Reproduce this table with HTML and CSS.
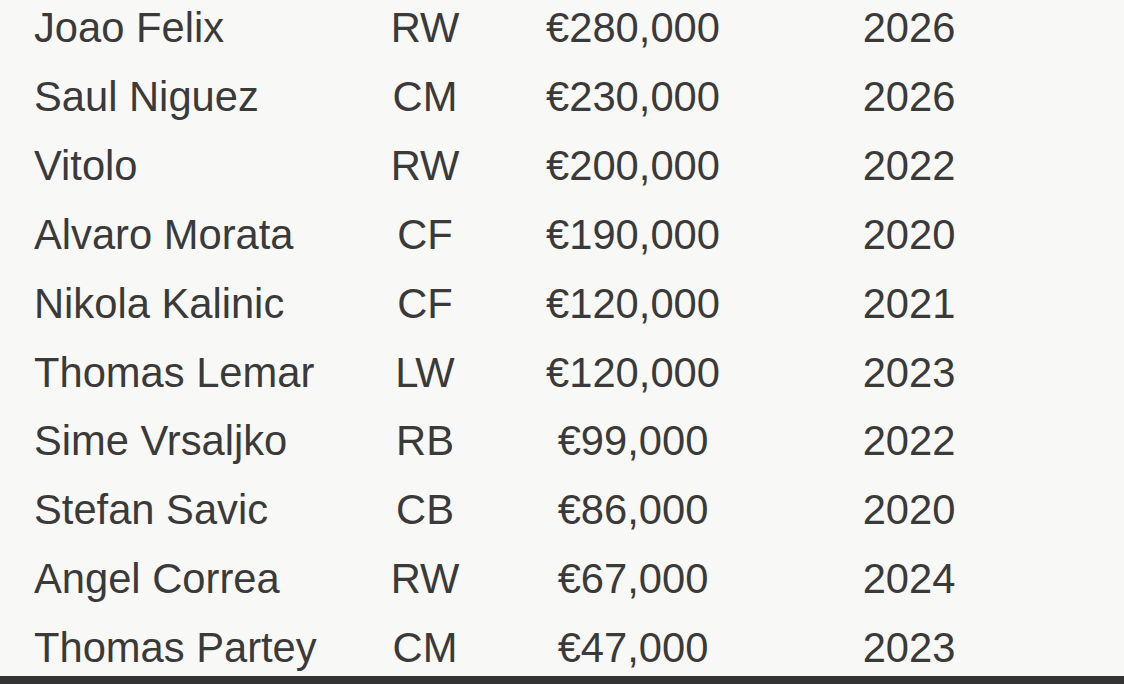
FILE: index.html
```html
<!DOCTYPE html>
<html>
<head>
<meta charset="utf-8">
<link rel="stylesheet" href="styles.css">
</head>
<body>
<div class="page">
  <div class="table-wrap">
    <div class="table">
      <div class="row"><span class="name">Joao Felix</span><span class="pos">RW</span><span class="wage">€280,000</span><span class="year">2026</span></div>
      <div class="row"><span class="name">Saul Niguez</span><span class="pos">CM</span><span class="wage">€230,000</span><span class="year">2026</span></div>
      <div class="row"><span class="name">Vitolo</span><span class="pos">RW</span><span class="wage">€200,000</span><span class="year">2022</span></div>
      <div class="row"><span class="name">Alvaro Morata</span><span class="pos">CF</span><span class="wage">€190,000</span><span class="year">2020</span></div>
      <div class="row"><span class="name">Nikola Kalinic</span><span class="pos">CF</span><span class="wage">€120,000</span><span class="year">2021</span></div>
      <div class="row"><span class="name">Thomas Lemar</span><span class="pos">LW</span><span class="wage">€120,000</span><span class="year">2023</span></div>
      <div class="row"><span class="name">Sime Vrsaljko</span><span class="pos">RB</span><span class="wage">€99,000</span><span class="year">2022</span></div>
      <div class="row"><span class="name">Stefan Savic</span><span class="pos">CB</span><span class="wage">€86,000</span><span class="year">2020</span></div>
      <div class="row"><span class="name">Angel Correa</span><span class="pos">RW</span><span class="wage">€67,000</span><span class="year">2024</span></div>
      <div class="row"><span class="name">Thomas Partey</span><span class="pos">CM</span><span class="wage">€47,000</span><span class="year">2023</span></div>
    </div>
  </div>
  <div class="bar"></div>
</div>
</body>
</html>
```

FILE: styles.css
```css
html, body {
  margin: 0;
  padding: 0;
  background: #f8f8f6;
}
.page {
  width: 1124px;
  height: 684px;
  display: flex;
  flex-direction: column;
  overflow: hidden;
}
.table-wrap {
  flex: 1;
  overflow: hidden;
}
.table {
  margin-top: -6px;
  padding-left: 34px;
  font-family: "Liberation Sans", Arial, sans-serif;
  font-size: 41.7px;
  line-height: 68.9px;
  color: #3a3a3a;
}
.row {
  display: grid;
  grid-template-columns: 326px 130px 286px 266px;
  white-space: nowrap;
}
.name {
  text-align: left;
}
.pos, .wage, .year {
  text-align: center;
}
.bar {
  height: 8px;
  background: #333333;
}
```
